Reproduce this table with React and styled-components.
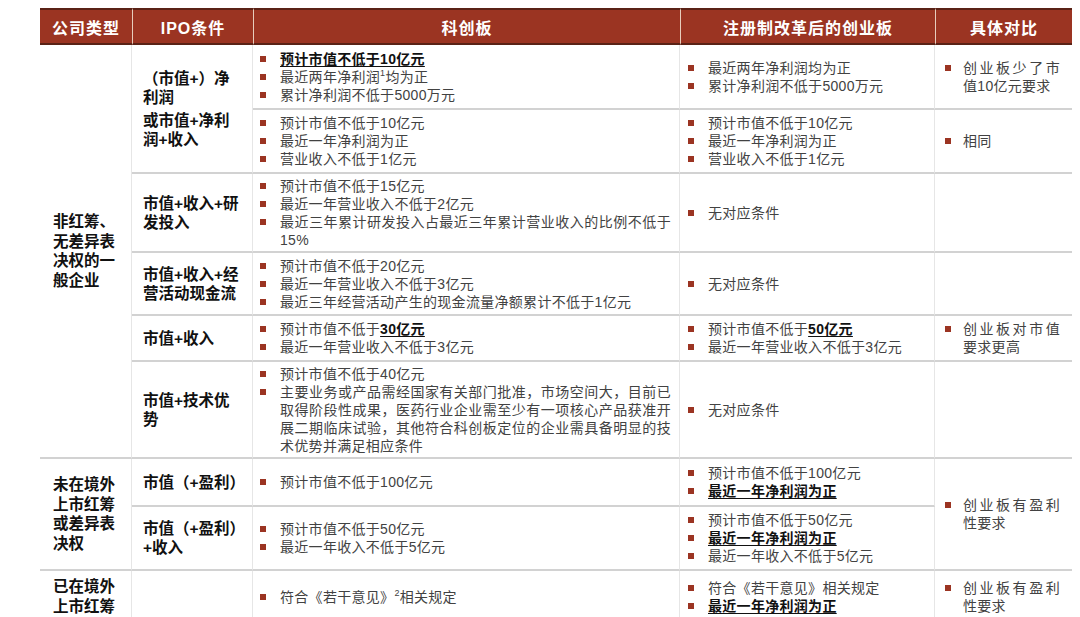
import React from "react";
import styled, { createGlobalStyle } from "styled-components";

const GlobalStyle = createGlobalStyle`
  html, body {
    margin: 0;
    padding: 0;
    background: #fff;
    overflow: hidden;
  }
  body {
    font-family: "Liberation Sans", "Noto Sans CJK SC", sans-serif;
  }
`;

const Table = styled.div`
  display: grid;
  grid-template-columns: 92px 121px 427px 255px 137px;
  grid-template-rows: 37px 65px 64px 79px 63px 46px 97px 48px 64px 53px;
  width: 1032px;
  margin: 8px 0 0 40px;
`;

const HeadCell = styled.div`
  display: flex;
  align-items: center;
  justify-content: center;
  background: #9b3422;
  color: #fff;
  font-size: 16px;
  font-weight: 700;
  letter-spacing: 1px;
  border-top: 2px solid #5a2216;
  border-bottom: 2px solid #5a2216;
  border-left: 1px solid #e8cdbd;

  &:first-child {
    border-left: none;
  }
`;

const Cell = styled.div`
  grid-column: ${(p) => p.$col};
  grid-row: ${(p) => p.$row} / span ${(p) => p.$span || 1};
  display: flex;
  flex-direction: column;
  justify-content: center;
  box-sizing: border-box;
  border-bottom: 2px solid #d2d2d2;
  border-right: ${(p) => (p.$col === 5 ? "none" : "1px solid #e6e6e6")};
`;

const TypeCell = styled(Cell)`
  padding: 0 15px 0 13px;
  font-size: 15.5px;
  font-weight: 700;
  line-height: 19.5px;
  color: #111;
`;

const CondCell = styled(Cell)`
  gap: 4px;
  padding: 0 4px 0 11px;
  font-size: 15.5px;
  font-weight: 700;
  line-height: 19px;
  color: #111;
`;

const ListCell = styled(Cell)`
  padding: 0 ${(p) => p.$pr}px 0 ${(p) => p.$pl}px;
  font-size: 14px;
  letter-spacing: 0.3px;
  line-height: 18px;
  color: #424242;
`;

const Item = styled.div`
  display: flex;
  align-items: flex-start;
`;

const Bullet = styled.span`
  flex: none;
  width: 6px;
  height: 6px;
  margin: 6px ${(p) => p.$gap}px 0 0;
  background: #9b3422;
`;

const Text = styled.span`
  flex: 1;
  text-align: justify;
`;

const Key = styled.span`
  font-weight: 700;
  color: #111;
  text-decoration: underline;
  text-underline-offset: 2px;
`;

const Sup = styled.sup`
  font-size: 9px;
  line-height: 0;
`;

const colPad = {
  3: { pl: 7, pr: 8, gap: 14 },
  4: { pl: 8, pr: 8, gap: 14 },
  5: { pl: 10, pr: 12, gap: 12 },
};

function Points({ col, row, span, items }) {
  const p = colPad[col];
  return (
    <ListCell $col={col} $row={row} $span={span} $pl={p.pl} $pr={p.pr}>
      {items.map((it, i) => (
        <Item key={i}>
          <Bullet $gap={p.gap} />
          <Text>{it}</Text>
        </Item>
      ))}
    </ListCell>
  );
}

const netProfit = <Key>最近一年净利润为正</Key>;

export default function App() {
  return (
    <>
      <GlobalStyle />
      <Table>
        <HeadCell>公司类型</HeadCell>
        <HeadCell>IPO条件</HeadCell>
        <HeadCell>科创板</HeadCell>
        <HeadCell>注册制改革后的创业板</HeadCell>
        <HeadCell>具体对比</HeadCell>

        <TypeCell $col={1} $row={2} $span={6}>非红筹、无差异表决权的一般企业</TypeCell>
        <TypeCell $col={1} $row={8} $span={2}>未在境外上市红筹或差异表决权</TypeCell>
        <TypeCell $col={1} $row={10}>已在境外上市红筹</TypeCell>

        <CondCell $col={2} $row={2} $span={2}>
          <div>（市值+）净<br />利润</div>
          <div>或市值+净利<br />润+收入</div>
        </CondCell>
        <CondCell $col={2} $row={4}>市值+收入+研<br />发投入</CondCell>
        <CondCell $col={2} $row={5}>市值+收入+经<br />营活动现金流</CondCell>
        <CondCell $col={2} $row={6}>市值+收入</CondCell>
        <CondCell $col={2} $row={7}>市值+技术优<br />势</CondCell>
        <CondCell $col={2} $row={8}>市值（+盈利）</CondCell>
        <CondCell $col={2} $row={9}>市值（+盈利）<br />+收入</CondCell>
        <CondCell $col={2} $row={10} />

        <Points col={3} row={2} items={[
          <Key>预计市值不低于10亿元</Key>,
          <>最近两年净利润<Sup>1</Sup>均为正</>,
          "累计净利润不低于5000万元",
        ]} />
        <Points col={3} row={3} items={["预计市值不低于10亿元", "最近一年净利润为正", "营业收入不低于1亿元"]} />
        <Points col={3} row={4} items={[
          "预计市值不低于15亿元",
          "最近一年营业收入不低于2亿元",
          "最近三年累计研发投入占最近三年累计营业收入的比例不低于15%",
        ]} />
        <Points col={3} row={5} items={[
          "预计市值不低于20亿元",
          "最近一年营业收入不低于3亿元",
          "最近三年经营活动产生的现金流量净额累计不低于1亿元",
        ]} />
        <Points col={3} row={6} items={[
          <>预计市值不低于<Key>30亿元</Key></>,
          "最近一年营业收入不低于3亿元",
        ]} />
        <Points col={3} row={7} items={[
          "预计市值不低于40亿元",
          "主要业务或产品需经国家有关部门批准，市场空间大，目前已取得阶段性成果，医药行业企业需至少有一项核心产品获准开展二期临床试验，其他符合科创板定位的企业需具备明显的技术优势并满足相应条件",
        ]} />
        <Points col={3} row={8} items={["预计市值不低于100亿元"]} />
        <Points col={3} row={9} items={["预计市值不低于50亿元", "最近一年收入不低于5亿元"]} />
        <Points col={3} row={10} items={[<>符合《若干意见》<Sup>2</Sup>相关规定</>]} />

        <Points col={4} row={2} items={["最近两年净利润均为正", "累计净利润不低于5000万元"]} />
        <Points col={4} row={3} items={["预计市值不低于10亿元", "最近一年净利润为正", "营业收入不低于1亿元"]} />
        <Points col={4} row={4} items={["无对应条件"]} />
        <Points col={4} row={5} items={["无对应条件"]} />
        <Points col={4} row={6} items={[
          <>预计市值不低于<Key>50亿元</Key></>,
          "最近一年营业收入不低于3亿元",
        ]} />
        <Points col={4} row={7} items={["无对应条件"]} />
        <Points col={4} row={8} items={["预计市值不低于100亿元", netProfit]} />
        <Points col={4} row={9} items={["预计市值不低于50亿元", netProfit, "最近一年收入不低于5亿元"]} />
        <Points col={4} row={10} items={["符合《若干意见》相关规定", netProfit]} />

        <Points col={5} row={2} items={["创业板少了市值10亿元要求"]} />
        <Points col={5} row={3} items={["相同"]} />
        <Points col={5} row={4} items={[]} />
        <Points col={5} row={5} items={[]} />
        <Points col={5} row={6} items={["创业板对市值要求更高"]} />
        <Points col={5} row={7} items={[]} />
        <Points col={5} row={8} span={2} items={["创业板有盈利性要求"]} />
        <Points col={5} row={10} items={["创业板有盈利性要求"]} />
      </Table>
    </>
  );
}
